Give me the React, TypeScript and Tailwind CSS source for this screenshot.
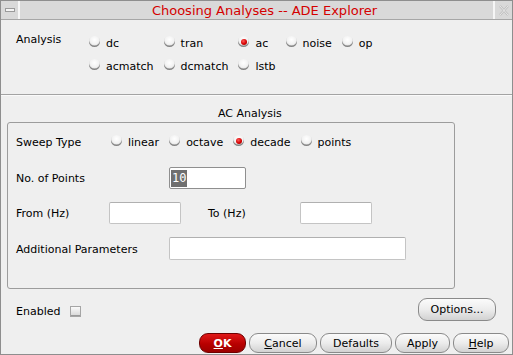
import React from 'react';

const Radio: React.FC<{ label: string; checked?: boolean }> = ({ label, checked }) => (
  <div className="flex items-center gap-[6px] h-[13px]">
    <span className="relative mb-[4px] flex items-center justify-center w-[11px] h-[11px] shrink-0 rounded-full bg-[radial-gradient(circle_at_50%_35%,#ffffff_0%,#f3f3f3_45%,#c9c9c9_100%)] shadow-[inset_0_-1.5px_0_#858585]">
      {checked && (
        <span className="w-[6px] h-[6px] rounded-full bg-[radial-gradient(circle_at_40%_35%,#ff5a5a_0%,#d40000_55%,#8e0000_100%)]" />
      )}
    </span>
    <span className="leading-[13px] whitespace-nowrap">{label}</span>
  </div>
);

const Field: React.FC<{ w: string; children?: React.ReactNode; focus?: boolean }> = ({ w, children, focus }) => (
  <div
    className={`${w} h-full bg-white rounded-[2px] border flex items-center pl-[1px] ${
      focus ? 'border-[#8f8f8f]' : 'border-[#c4c4c4] border-t-[#b0b0b0]'
    }`}
  >
    {children}
  </div>
);

const Btn: React.FC<{ w: string; children: React.ReactNode; primary?: boolean }> = ({ w, children, primary }) => (
  <button
    className={`${w} h-full rounded-[9px] border flex items-center justify-center leading-none ${
      primary
        ? 'border-[#6e0000] bg-[linear-gradient(#e01818,#b80000_55%,#9c0000)] text-white font-bold'
        : 'border-[#8a8a8a] bg-[linear-gradient(#fbfbfb,#ececec_50%,#d2d2d2)] text-black'
    }`}
  >
    {children}
  </button>
);

export default function App() {
  return (
    <div
      className="w-[513px] h-[355px] border border-[#8e8e8e] bg-[#efefef] flex flex-col text-[11px] text-black"
      style={{ fontFamily: '"DejaVu Sans", Verdana, sans-serif' }}
    >
      {/* title bar */}
      <div className="h-[19px] shrink-0 flex bg-[#d9d9d9] border-b border-[#a6a6a6]">
        <div className="w-[19px] border-r-2 border-[#f6f6f6] flex items-center justify-center">
          <span className="w-[10px] h-[4px] bg-[#f4f4f4] border border-[#9a9a9a]" />
        </div>
        <div className="flex-1 flex items-center justify-center pl-[16px] text-[13px] text-[#d40000] leading-none">
          Choosing Analyses -- ADE Explorer
        </div>
        <div className="w-[19px] border-l-2 border-[#f6f6f6] flex items-center justify-center">
          <svg width="10" height="11" viewBox="0 0 10 11">
            <path d="M1 1 L9 10 M9 1 L1 10" stroke="#bdbdbd" strokeWidth="2.2" fill="none" />
            <path d="M1 1 L9 10 M9 1 L1 10" stroke="#f4f4f4" strokeWidth="0.8" fill="none" />
          </svg>
        </div>
      </div>

      {/* analysis chooser */}
      <div className="h-[74px] shrink-0 flex items-start pt-[13px] pl-[15px]">
        <div className="w-[73px] leading-[13px]">Analysis</div>
        <div className="mt-[4px] grid grid-cols-[auto_auto_auto_auto_auto] grid-rows-[13px_13px] justify-start content-start gap-x-[10px] gap-y-[10px]">
          <Radio label="dc" />
          <Radio label="tran" />
          <Radio label="ac" checked />
          <Radio label="noise" />
          <Radio label="op" />
          <Radio label="acmatch" />
          <Radio label="dcmatch" />
          <Radio label="lstb" />
        </div>
      </div>

      <div className="h-[2px] shrink-0 border-t border-[#a3a3a3] border-b border-b-[#fafafa]" />

      <div className="mt-[11px] h-[13px] leading-[13px] pl-[217px] shrink-0">AC Analysis</div>

      {/* group box */}
      <div className="mt-[2px] ml-[6px] w-[448px] h-[167px] shrink-0 border border-[#9c9c9c] rounded-[3px] pt-[13px] pl-[8px] flex flex-col">
        <div className="flex items-center h-[13px]">
          <div className="w-[95px] leading-[13px]">Sweep Type</div>
          <div className="flex gap-[10px]">
            <Radio label="linear" />
            <Radio label="octave" />
            <Radio label="decade" checked />
            <Radio label="points" />
          </div>
        </div>

        <div className="mt-[18px] h-[22px] flex items-center">
          <div className="w-[153px] pt-[2px]">No. of Points</div>
          <Field w="w-[77px]" focus>
            <span
              className="h-[17px] px-[1px] bg-[#6f6f6f] text-white text-[12px] leading-[17px]"
              style={{ fontFamily: '"DejaVu Sans Mono", monospace' }}
            >
              10
            </span>
          </Field>
        </div>

        <div className="mt-[13px] h-[22px] flex items-center">
          <div className="w-[93px] pt-[2px]">From (Hz)</div>
          <Field w="w-[72px]" />
          <div className="w-[27px]" />
          <div className="w-[92px] pt-[2px]">To (Hz)</div>
          <Field w="w-[72px]" />
        </div>

        <div className="mt-[13px] h-[23px] flex items-center">
          <div className="w-[153px] pt-[3px]">Additional Parameters</div>
          <Field w="w-[237px]" />
        </div>
      </div>

      {/* enabled / options */}
      <div className="mt-[9px] h-[23px] shrink-0 flex items-center pl-[15px] pr-[16px]">
        <span className="leading-[13px] pt-[4px]">Enabled</span>
        <span className="ml-[10px] mt-[3px] w-[11px] h-[11px] border border-[#a5a5a5] bg-[linear-gradient(#fafafa,#d6d6d6)] shadow-[inset_0_-1px_0_#9a9a9a]" />
        <div className="flex-1" />
        <Btn w="w-[78px]">Options...</Btn>
      </div>

      {/* bottom buttons */}
      <div className="mt-[12px] h-[20px] shrink-0 flex justify-end gap-[3px] pr-[3px]">
        <Btn w="w-[47px]" primary>
          <span className="underline">O</span>K
        </Btn>
        <Btn w="w-[68px]">
          <span className="underline">C</span>ancel
        </Btn>
        <Btn w="w-[72px]">Defaults</Btn>
        <Btn w="w-[55px]">Apply</Btn>
        <Btn w="w-[56px]">
          <span className="underline">H</span>elp
        </Btn>
      </div>
    </div>
  );
}
